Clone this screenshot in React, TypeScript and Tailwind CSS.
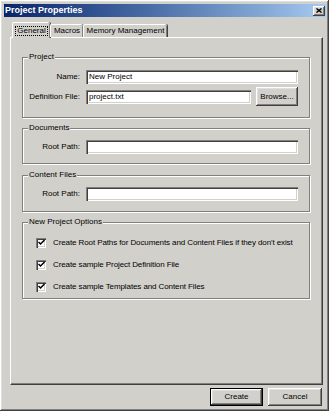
import React from 'react';

const raised =
  'shadow-[inset_-1px_-1px_0_#404040,inset_1px_1px_0_#ffffff,inset_-2px_-2px_0_#808080,inset_2px_2px_0_#dfdfdf]';
const sunken =
  'shadow-[inset_1px_1px_0_#808080,inset_2px_2px_0_#404040,inset_-1px_-1px_0_#ffffff,inset_-2px_-2px_0_#d2d0cb]';

const TextBox: React.FC<{ value?: string; className?: string }> = ({ value = '', className = '' }) => (
  <div className={`h-[14px] bg-white ${sunken} pl-[3px] flex items-center leading-none ${className}`}>{value}</div>
);

const Button: React.FC<{ label: string; isDefault?: boolean; className?: string }> = ({ label, isDefault, className = '' }) => (
  <div
    className={`flex items-center justify-center bg-[#d2d0cb] ${
      isDefault ? 'border border-black ' : ''
    }${raised} ${className}`}
  >
    {label}
  </div>
);

const Group: React.FC<{ title: string; className?: string; children: React.ReactNode }> = ({ title, className = '', children }) => (
  <div className={`relative border border-[#808080] shadow-[1px_1px_0_#ffffff,inset_1px_1px_0_#ffffff] ${className}`}>
    <span className="absolute -top-[6px] left-[5px] bg-[#d2d0cb] px-[1px] leading-[10px]">{title}</span>
    {children}
  </div>
);

const Field: React.FC<{ label: string; children: React.ReactNode }> = ({ label, children }) => (
  <div className="flex items-center">
    <div className="w-[58px] text-right pr-[1px] leading-none">{label}</div>
    <div className="ml-[5px] flex flex-1 items-center">{children}</div>
  </div>
);

const Check: React.FC<{ label: string }> = ({ label }) => (
  <div className="flex items-center h-[11px]">
    <div className={`w-[10px] h-[10px] bg-white ${sunken} flex items-center justify-center`}>
      <svg width="7" height="7" viewBox="0 0 7 7">
        <path d="M0.5 3 L2.5 5 L6.5 1" stroke="#000" strokeWidth="1.5" fill="none" />
      </svg>
    </div>
    <span className="ml-[7px] leading-none tracking-[-0.1px]">{label}</span>
  </div>
);

const tab =
  'bg-[#d2d0cb] rounded-t-[2px] border-l border-t border-white shadow-[inset_-1px_0_0_#808080,1px_0_0_#404040] flex justify-center';

export default function App() {
  return (
    <div
      className={`w-[329px] h-[411px] bg-[#d2d0cb] text-black text-[8px] font-['Liberation_Sans',Arial,sans-serif] flex flex-col p-[4px] pr-[3px] ${raised}`}
    >
      {/* title bar */}
      <div className="h-[13px] bg-linear-to-r from-[#0a246a] to-[#a6caf0] flex items-center justify-between pl-[1px] pr-[1px]">
        <span className="text-white font-bold text-[9px] leading-none">Project Properties</span>
        <div className={`w-[12px] h-[10px] bg-[#d2d0cb] ${raised} flex items-center justify-center`}>
          <svg width="6" height="5" viewBox="0 0 6 5">
            <path d="M0.5 0.5 L5.5 4.5 M5.5 0.5 L0.5 4.5" stroke="#000" strokeWidth="1.4" />
          </svg>
        </div>
      </div>

      {/* tabs */}
      <div className="mt-[5px] ml-[7px] pl-[1px] h-[16px] flex items-end relative z-10 -mb-[1px]">
        <div className={`h-[16px] w-[38px] items-start pt-[3px] ${tab}`}>
          <span className="border border-dotted border-black px-[1px] leading-[8px]">General</span>
        </div>
        <div className={`h-[13px] w-[33px] mb-[1px] items-center ${tab}`}>Macros</div>
        <div className={`h-[13px] w-[84px] mb-[1px] items-center ${tab}`}>Memory Management</div>
      </div>

      {/* tab panel */}
      <div className="ml-[6px] mr-[3px] h-[348px] border-l border-t border-white border-r border-b border-r-[#404040] border-b-[#404040] shadow-[inset_-1px_-1px_0_#808080] pt-[19px] pl-[11px] pr-[12px] flex flex-col">
        <Group title="Project" className="h-[61px] pt-[12px] pr-[11px]">
          <Field label="Name:">
            <TextBox value="New Project" className="flex-1" />
          </Field>
          <div className="mt-[3px]">
            <Field label="Definition File:">
              <TextBox value="project.txt" className="flex-1" />
              <Button label="Browse..." className="ml-[5px] w-[42px] h-[19px]" />
            </Field>
          </div>
        </Group>

        <Group title="Documents" className="mt-[10px] h-[36px] pt-[11px] pr-[11px]">
          <Field label="Root Path:">
            <TextBox className="flex-1" />
          </Field>
        </Group>

        <Group title="Content Files" className="mt-[11px] h-[37px] pt-[11px] pr-[11px]">
          <Field label="Root Path:">
            <TextBox className="flex-1" />
          </Field>
        </Group>

        <Group title="New Project Options" className="mt-[10px] h-[77px] pt-[14px] pl-[13px] flex flex-col gap-[11px]">
          <Check label="Create Root Paths for Documents and Content Files if they don't exist" />
          <Check label="Create sample Project Definition File" />
          <Check label="Create sample Templates and Content Files" />
        </Group>
      </div>

      {/* buttons */}
      <div className="mt-[3px] mr-[4px] flex justify-end gap-[5px]">
        <Button label="Create" isDefault className="w-[53px] h-[18px]" />
        <Button label="Cancel" className="w-[54px] h-[18px]" />
      </div>
    </div>
  );
}
